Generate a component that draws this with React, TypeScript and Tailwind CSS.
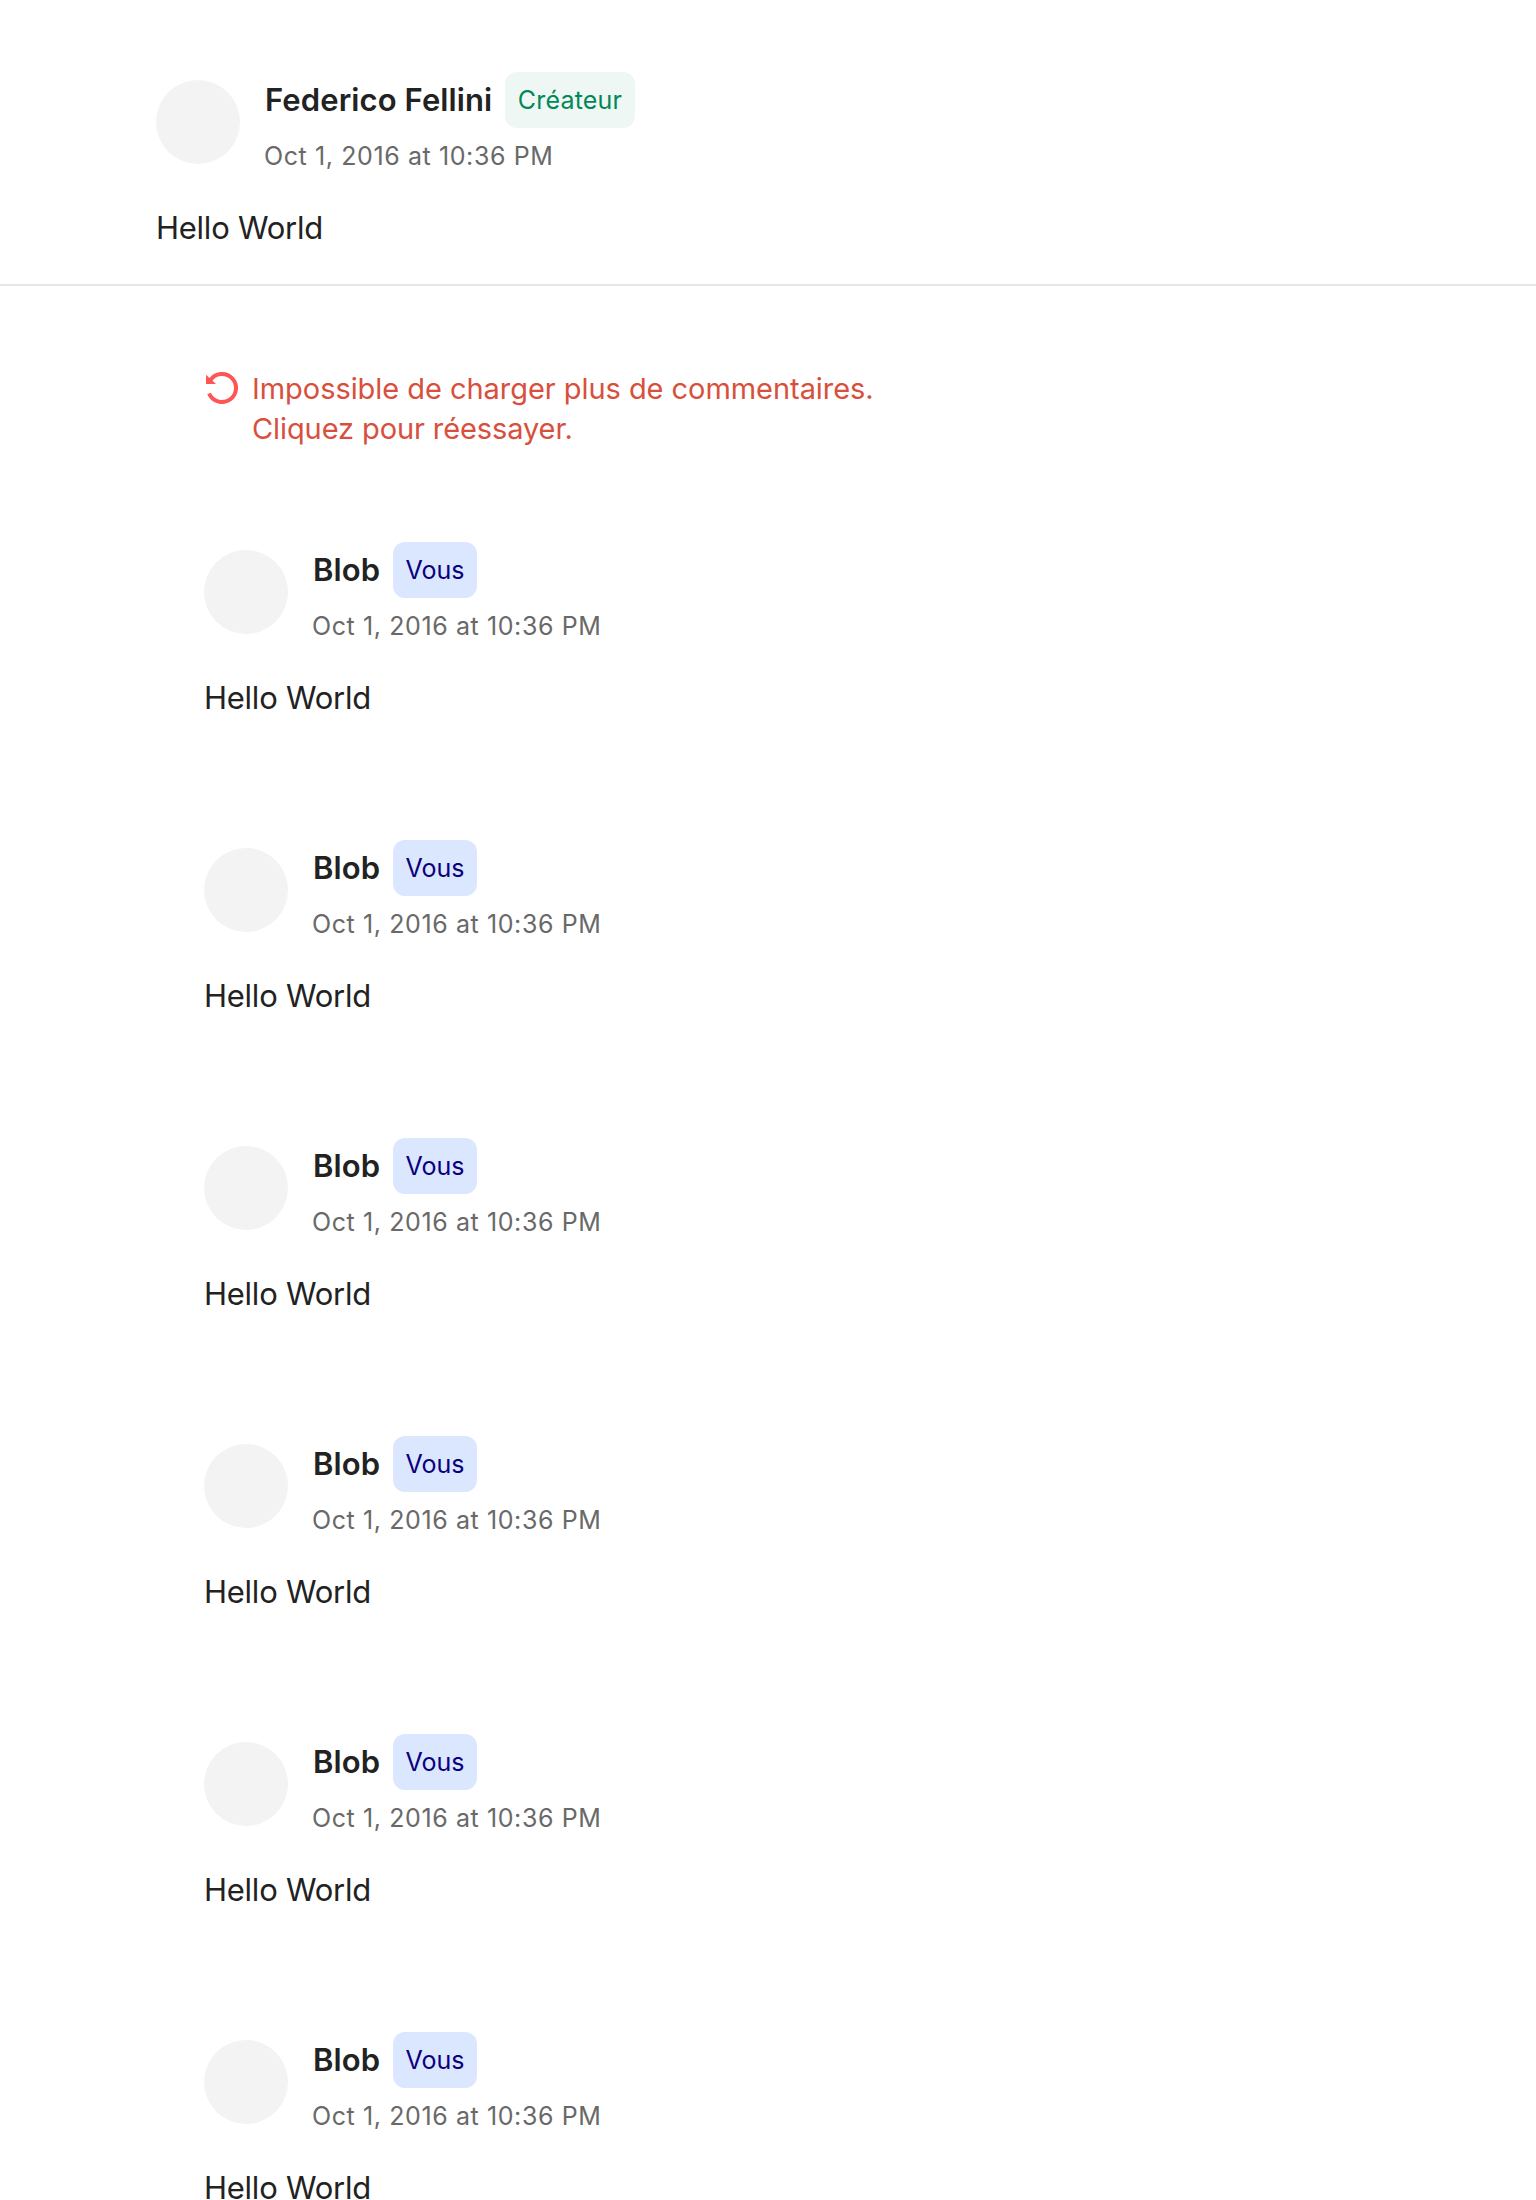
type CommentProps = {
  name: string;
  badge: string;
  nameClass: string;
  badgeClass: string;
};

function Comment({ name, badge, nameClass, badgeClass }: CommentProps) {
  return (
    <article className="text-[#222222]">
      <div className="flex h-[100px] gap-6">
        <div className="mt-2 size-[84px] shrink-0 rounded-full bg-[#f3f3f3]" />
        <div>
          <div className="flex h-14 items-center">
            <span className={`text-[31px] leading-10 font-semibold whitespace-nowrap ${nameClass}`}>{name}</span>
            <span
              className={`flex h-14 items-center justify-center rounded-xl text-[25px] leading-8 whitespace-nowrap ${badgeClass}`}
            >
              {badge}
            </span>
          </div>
          <p className="mt-3 text-[25px] leading-8 tracking-[0.6px] whitespace-nowrap text-[#696969]">
            Oct 1, 2016 at 10:36 PM
          </p>
        </div>
      </div>
      <p className="mt-9 h-10 text-[31px] leading-10 tracking-[-0.25px]">Hello World</p>
    </article>
  );
}

function RetryIcon() {
  return (
    <svg className="mt-[2px] ml-[2px] size-8 shrink-0" viewBox="0 0 32 32" fill="none">
      <path d="M4.4 8.2A14 14 0 1 1 3.1 21.4" stroke="#ff5555" strokeWidth="4" />
      <path d="M0 2.8V12h10z" fill="#ff5555" />
    </svg>
  );
}

export default function App() {
  return (
    <main className="h-[2200px] w-[1536px] overflow-hidden bg-white font-['Inter',sans-serif]">
      <header className="h-[286px] border-b-2 border-[#e6e6e6] pt-[72px] pl-[156px]">
        <Comment
          name="Federico Fellini"
          badge="Créateur"
          nameClass="w-[241px] pl-px tracking-[0.1px]"
          badgeClass="w-[130px] bg-[#eff7f4] tracking-[0.2px] text-[#028858]"
        />
      </header>
      <section className="pt-[84px] pl-[204px]">
        <button className="flex h-20 gap-[14px] text-left text-[29px] leading-10 text-[#d8503d]">
          <RetryIcon />
          <span className="-mt-px tracking-[-0.05px]">
            Impossible de charger plus de commentaires.
            <br />
            <span className="tracking-[-0.1px]">Cliquez pour réessayer.</span>
          </span>
        </button>
        <div className="mt-[92px] flex flex-col gap-[122px]">
          {Array.from({ length: 6 }, (_, i) => (
            <Comment
              key={i}
              name="Blob"
              badge="Vous"
              nameClass="w-[81px] pl-px tracking-[0.1px]"
              badgeClass="w-[84px] bg-[#dbe6ff] text-[#0a007d]"
            />
          ))}
        </div>
      </section>
    </main>
  );
}
